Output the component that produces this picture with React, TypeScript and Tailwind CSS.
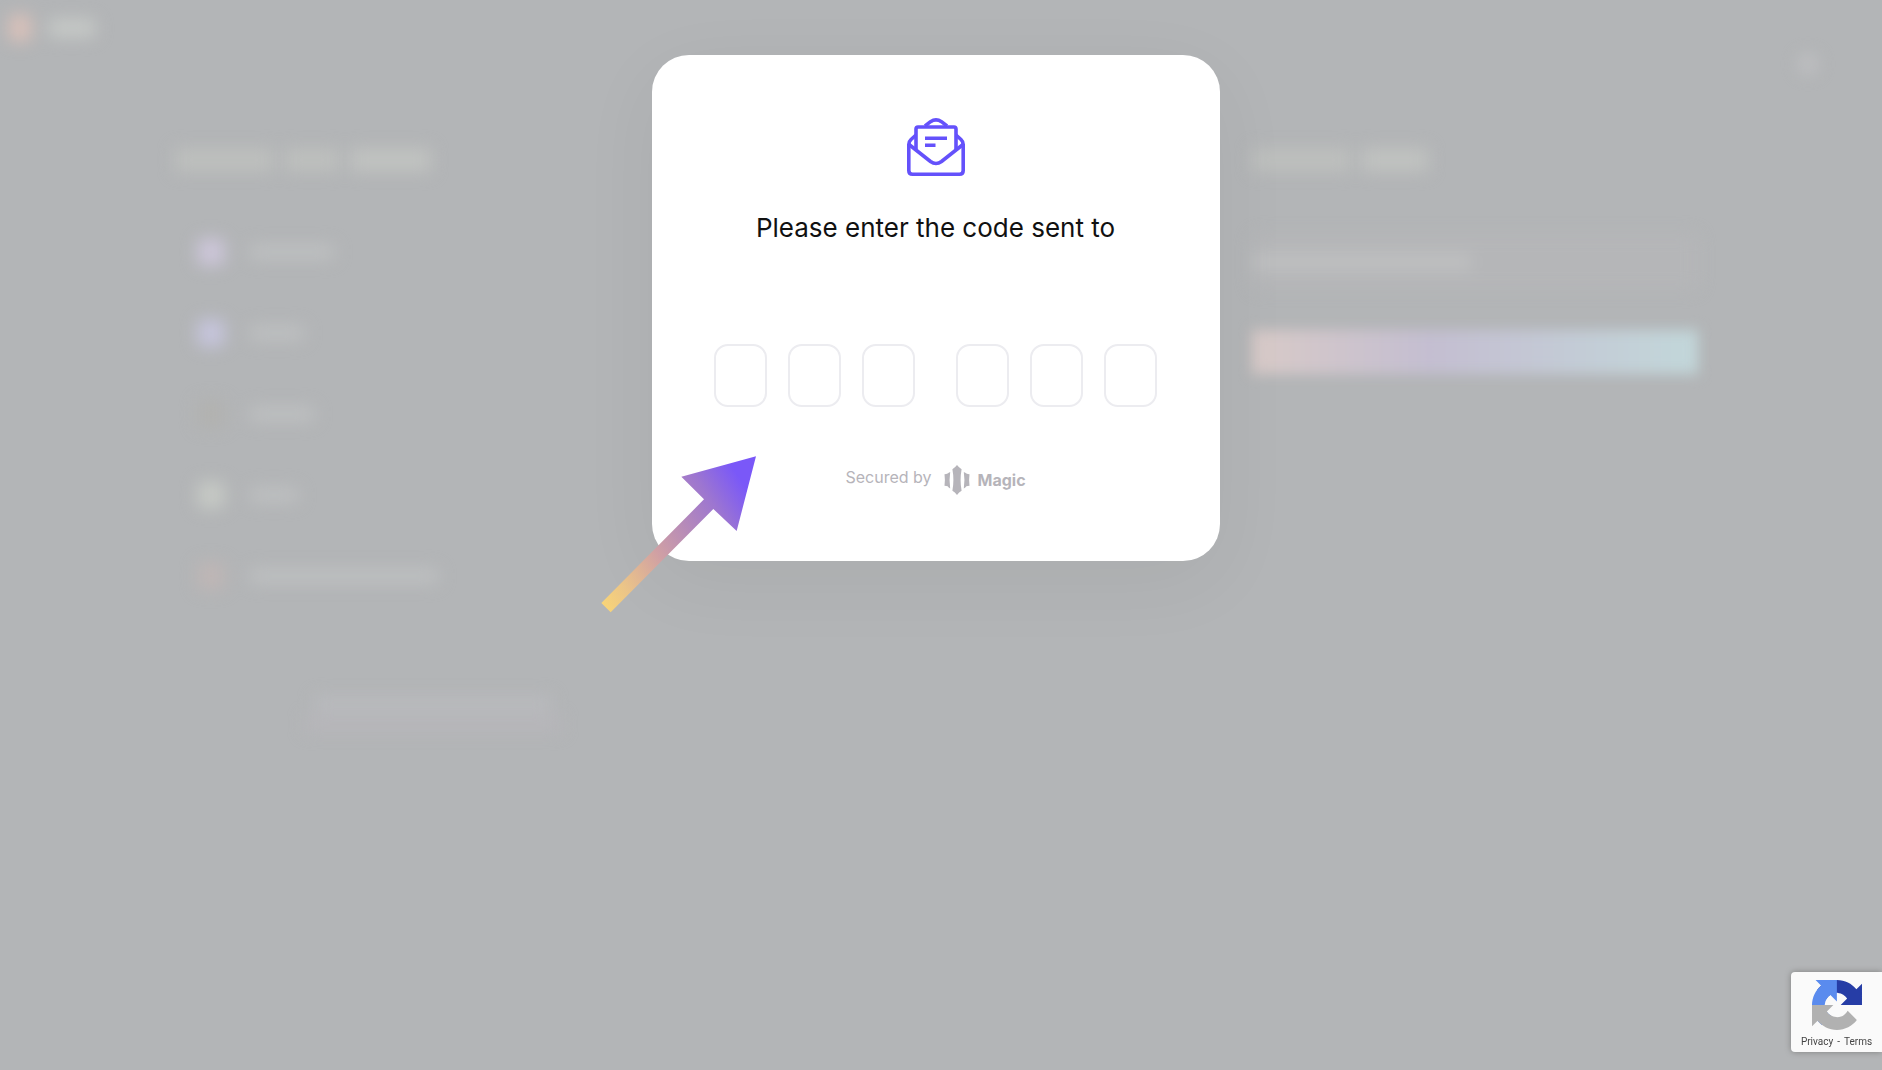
import { ReactNode } from "react";

const wallets = [
    { icon: "bg-[#cbc5d7]", label: "w-[86px]" },
    { icon: "bg-[#c5c4da]", label: "w-14" },
    { icon: "bg-[#b2b2b0]", label: "w-[66px]" },
    { icon: "bg-[#c5c8c4]", label: "w-[50px]" },
    { icon: "bg-[#beb6b5]", label: "w-[190px]" },
];

const MailIcon = () => (
    <svg className="size-[58px]" viewBox="0 0 58 58" fill="none" stroke="#6451fb" strokeWidth="3.6">
        <path d="M9 31V11q0-2 2-2h36q2 0 2 2v20" />
        <path d="M18 8l5.500-4.300q5.500-3.600 11 0L40 8" />
        <path d="M9 17l-5 4.500q-2.200 2-2.200 5V52.500q0 3.700 3.700 3.700h47q3.700 0 3.700-3.700V26.500q0-3-2.200-5L49 17" />
        <path d="M2 26.500L23.500 43.500q5.500 4 11 0L56 26.500" />
        <path d="M18 20.200h22M18 27.300h10.500" />
    </svg>
);

const MagicIcon = () => (
    <svg className="h-[30px] w-[26px]" viewBox="0 0 26 30" fill="#b6b4ba">
        <path d="M13 0q2 2.600 4.600 4.200Q15.600 15 17.600 25.800 15 27.400 13 30q-2-2.600-4.600-4.200Q10.400 15 8.400 4.200 11 2.600 13 0z" />
        <path d="M6.200 7Q4.900 15 6.200 23.500 4.500 22.500 3.600 21.300 2.300 20.800 0.500 20.800 1.300 15 0.500 9.300 2.300 9.200 3.600 8.500 4.500 7.800 6.200 7z" />
        <path d="M19.800 7Q21.100 15 19.800 23.500 21.500 22.500 22.400 21.300 23.700 20.800 25.500 20.800 24.700 15 25.500 9.300 23.700 9.200 22.400 8.500 21.500 7.800 19.800 7z" />
    </svg>
);

const RecaptchaIcon = () => (
    <svg className="size-[50px]" viewBox="0 0 64 64">
        <path fill="#263da6" d="M64 31.955l-.033-1.370V4.687l-7.160 7.160C50.947 4.674 42.033.093 32.050.093c-10.390 0-19.622 4.960-25.458 12.640l11.736 11.860a15.550 15.550 0 0 1 4.754-5.334c2.050-1.600 4.952-2.906 8.968-2.906.485 0 .860.057 1.135.163 4.976.393 9.288 3.140 11.828 7.124l-8.307 8.307L64 31.953" />
        <path fill="#5a8bee" d="M31.862.094l-1.370.033H4.594l7.160 7.160C4.580 13.147 0 22.060 0 32.046c0 10.390 4.960 19.622 12.640 25.458L24.500 45.768a15.550 15.550 0 0 1-5.334-4.754c-1.600-2.050-2.906-4.952-2.906-8.968 0-.485.057-.860.163-1.135.393-4.976 3.140-9.288 7.124-11.828l8.307 8.307L31.860.095" />
        <path fill="#b1b1b1" d="M.001 32.045l.033 1.370v25.898l7.160-7.160c5.860 7.173 14.774 11.754 24.760 11.754 10.390 0 19.622-4.960 25.458-12.640l-11.736-11.860a15.550 15.550 0 0 1-4.754 5.334c-2.050 1.600-4.952 2.906-8.968 2.906-.485 0-.860-.057-1.135-.163-4.976-.393-9.288-3.140-11.828-7.124l8.307-8.307-27.297-.008" />
    </svg>
);

const Arrow = () => (
    <svg className="absolute -left-[52px] top-[400px] h-[159px] w-[157px]" viewBox="60 74 471 477" aria-hidden="true">
        <defs>
            <linearGradient id="arrow" gradientUnits="userSpaceOnUse" x1="76" y1="532" x2="540" y2="240">
                <stop offset="0" stopColor="#f8d478" />
                <stop offset="0.150" stopColor="#ebc488" />
                <stop offset="0.400" stopColor="#d0a0a4" />
                <stop offset="0.600" stopColor="#b78bb8" />
                <stop offset="0.800" stopColor="#9d76d0" />
                <stop offset="1" stopColor="#7a58f8" />
            </linearGradient>
        </defs>
        <path fill="url(#arrow)" d="M64 518L372 207 304 139 528 78 470 302 400 236 92 546z" />
    </svg>
);

const CodeGroup = ({ start }: { start: number }) => (
    <div className="flex gap-[21px]">
        {[0, 1, 2].map((i) => (
            <input
                key={i}
                type="text"
                inputMode="numeric"
                maxLength={1}
                aria-label={`Digit ${start + i}`}
                className="h-[63px] w-[53px] rounded-[14px] border-2 border-[#ececf0] bg-white text-center text-2xl outline-none"
            />
        ))}
    </div>
);

const Backdrop = () => (
    <div className="col-start-1 row-start-1 flex flex-col overflow-hidden" aria-hidden="true">
        <div className="flex justify-between pl-2 pr-[62px]">
            <div className="flex items-center gap-4 self-start pt-[14px] blur-[8px]">
                <div className="h-7 w-6 rounded-md bg-[#d6c0b9]" />
                <div className="h-5 w-12 rounded-md bg-[#c4c7c5]" />
            </div>
            <div className="mt-[52px] size-6 rounded-full bg-[#bbbcbe] blur-[7px]" />
        </div>
        <div className="flex justify-between pl-[175px] pr-[184px] pt-[72px]">
            <div className="flex flex-col">
                <div className="flex gap-3 blur-[8px]">
                    <div className="h-6 w-[98px] bg-[#bdbfbd]" />
                    <div className="h-6 w-[54px] bg-[#bdbfbd]" />
                    <div className="h-6 w-20 bg-[#c0c2c0]" />
                </div>
                <div className="flex flex-col gap-[53px] pl-[22px] pt-[66px]">
                    {wallets.map((w) => (
                        <div key={w.label} className="flex h-7 items-center gap-6 blur-[8px]">
                            <div className={`size-7 rounded-md ${w.icon}`} />
                            <div className={`h-4 rounded-md bg-[#bdbfc0] ${w.label}`} />
                        </div>
                    ))}
                </div>
                <div className="flex flex-col items-center gap-1 pl-[130px] pt-[106px] blur-[8px]">
                    <div className="h-4 w-[236px] bg-[#b9babd]" />
                    <div className="h-4 w-[256px] bg-[#b7b6ba]" />
                </div>
            </div>
            <div className="flex w-[446px] flex-col">
                <div className="flex gap-3 blur-[8px]">
                    <div className="h-6 w-[98px] bg-[#bdbfbd]" />
                    <div className="h-6 w-[66px] bg-[#c0c2c0]" />
                </div>
                <div className="mt-[62px] flex h-14 items-center rounded-lg bg-[#b5b6b8] blur-[8px]">
                    <div className="h-4 w-[220px] rounded-md bg-[#bfc0c1]" />
                </div>
                <div className="mt-10 h-11 bg-linear-to-r from-[#d8cac7] from-0% via-[#c4bed1] via-40% to-[#c2d7da] blur-[7px]" />
            </div>
        </div>
    </div>
);

const Modal = ({ children }: { children: ReactNode }) => (
    <div className="relative w-[568px] rounded-[37px] bg-white shadow-[0_20px_80px_rgba(0,0,0,0.05)]">{children}</div>
);

const App = () => {
    return (
        <div className="grid min-h-screen bg-[#b3b5b7] font-[Inter,sans-serif]">
            <Backdrop />
            <main className="z-10 col-start-1 row-start-1 flex items-start justify-center pr-[11px] pt-[55px]">
                <Modal>
                    <form className="flex flex-col items-center pb-[66px] pt-[63px]">
                        <MailIcon />
                        <h1 className="mt-8 text-[26px] leading-10 text-[#111]">Please enter the code sent to</h1>
                        <div className="mt-24 flex gap-[41px]">
                            <CodeGroup start={1} />
                            <CodeGroup start={4} />
                        </div>
                        <div className="mt-[58px] flex items-start text-base text-[#b6b4ba]">
                            <span>Secured by</span>
                            <a href="#magic" className="ml-3 flex items-center gap-2 font-bold">
                                <MagicIcon />
                                Magic
                            </a>
                        </div>
                    </form>
                    <Arrow />
                </Modal>
            </main>
            <div className="fixed bottom-[18px] right-0 z-20 flex h-20 w-[91px] flex-col items-center rounded-l-[4px] bg-[#fafafa] pt-2 shadow-[0_0_6px_#808080]">
                <RecaptchaIcon />
                <div className="mt-1 flex gap-1 whitespace-nowrap font-[Roboto,sans-serif] text-[10px] leading-4 text-[#444]">
                    <a href="#privacy">Privacy</a>
                    <span>-</span>
                    <a href="#terms">Terms</a>
                </div>
            </div>
        </div>
    );
};

export default App;
